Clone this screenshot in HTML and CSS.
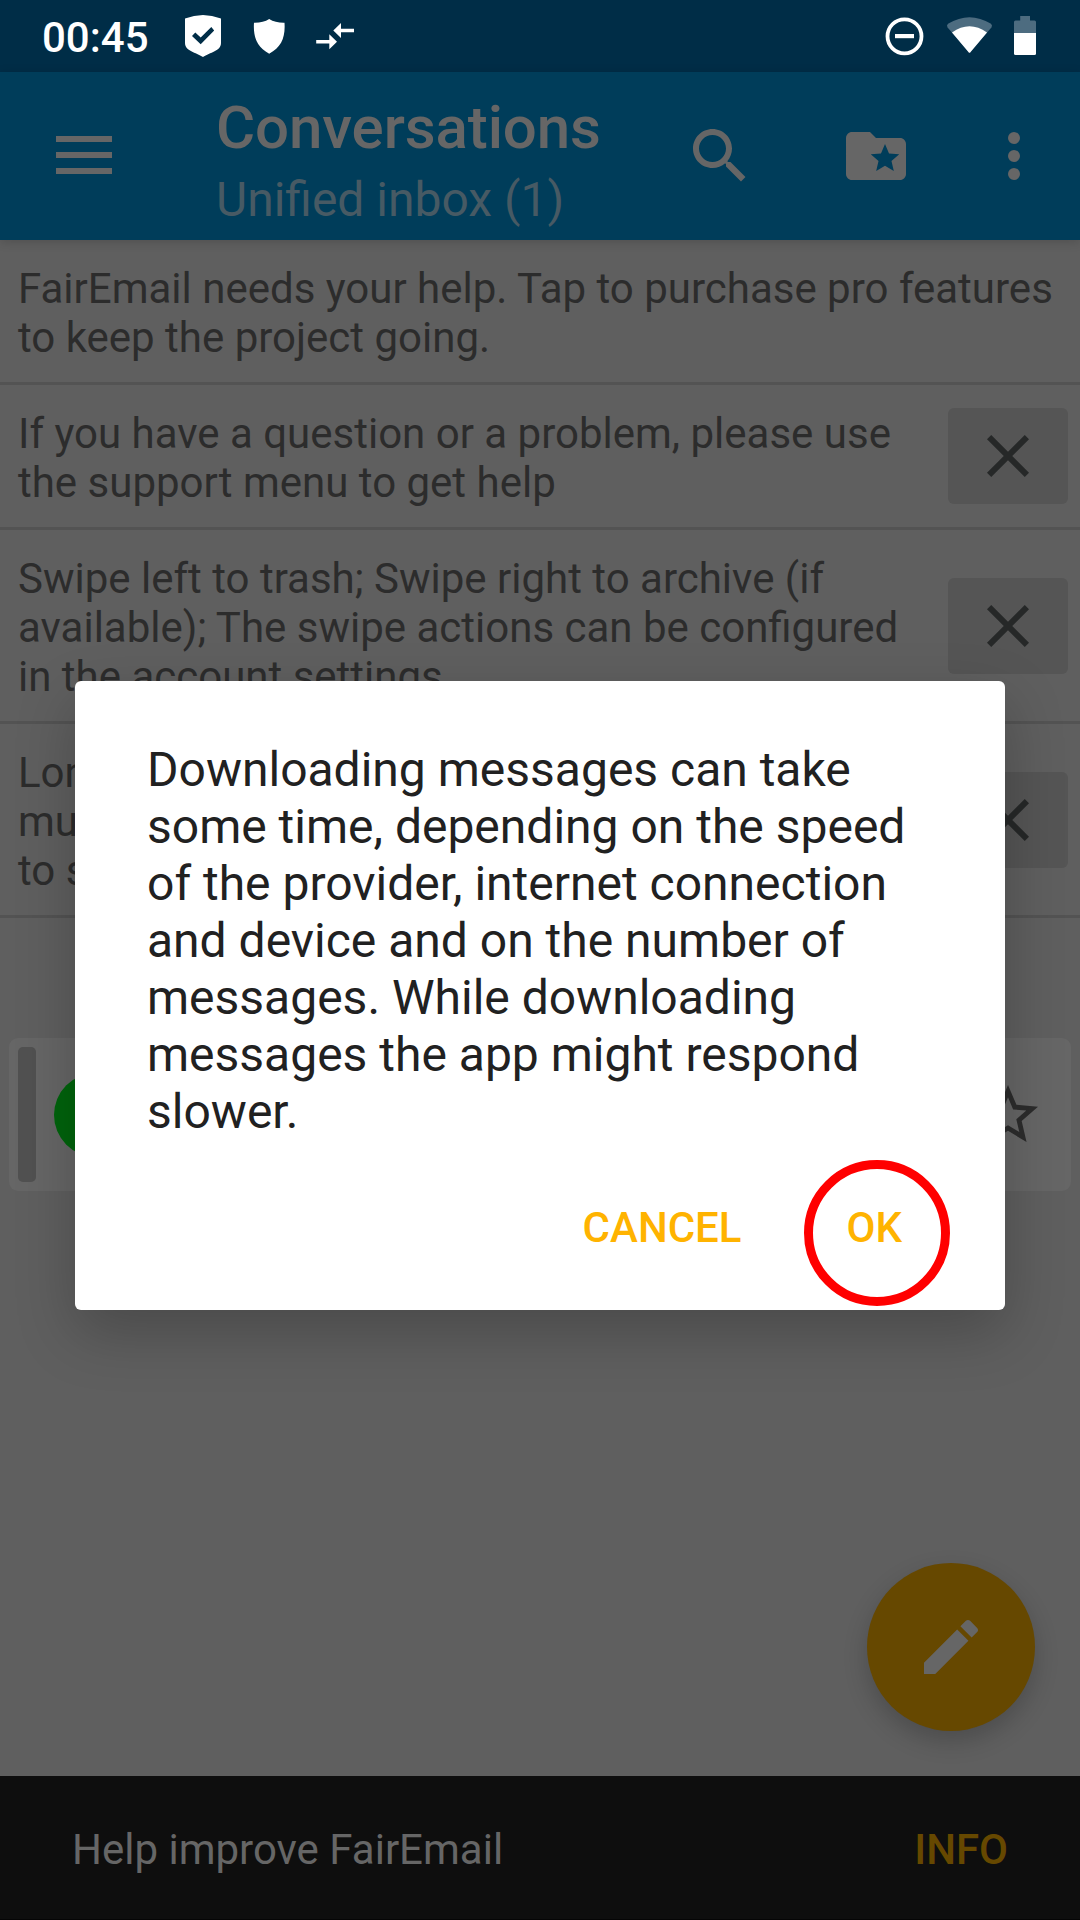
FILE: index.html
```html
<!DOCTYPE html>
<html lang="en">
<head>
<meta charset="utf-8">
<title>FairEmail</title>
<link rel="stylesheet" href="styles.css">
</head>
<body>
<div class="screen">
  <header class="status-bar">
    <span class="clock">00:45</span>
    <svg class="status-left" width="170" height="72" viewBox="185 0 170 72" fill="#fff">
      <path fill-rule="evenodd" d="M185 18.5Q203 11.5 221 18.5V43C221 51 210 52.500 203 57C196 52.500 185 51 185 43ZM195.300 32.500L192 36L200.700 44.200L214.200 30.500L211.300 27L200.700 37.600Z"/>
      <path d="M254 22.800Q263 23 269.200 19Q275.500 23 284.500 22.800C285.500 37 281.500 47.500 269.200 53.700C257 47.500 253 37 254 22.800Z"/>
      <path d="M333.300 30.500L341 23V28.700H354V32.300H341V38ZM337 41.700L329.300 49.200V43.500H316.200V39.900H329.300V34.200Z"/>
    </svg>
    <svg class="status-right" width="152" height="72" viewBox="885 0 152 72" fill="#fff">
      <circle cx="904.500" cy="36.300" r="17" fill="none" stroke="#fff" stroke-width="3.800"/>
      <rect x="895" y="34" width="19" height="4.200"/>
      <path fill="#4d6c80" d="M969.500 53L947.600 27.500Q946.200 25.300 948 23.800Q969.500 10.500 991 23.800Q992.800 25.300 991.400 27.500Z"/>
      <path d="M968 51.500L952 32.500Q969.500 20 987 32.500L971 51.500Q969.500 54 968 51.500Z"/>
      <path fill="#4d6c80" d="M1020.200 16H1030V20.500H1034.500Q1036 20.500 1036 22V33.500H1014V22Q1014 20.500 1015.500 20.500H1020.200Z"/>
      <path d="M1014 33H1036V53.500Q1036 55 1034.500 55H1015.500Q1014 55 1014 53.500Z"/>
    </svg>
  </header>

  <div class="toolbar">
    <svg class="menu-icon" width="56" height="38" viewBox="0 0 56 38"><path d="M0 0h56v6H0zM0 16h56v6H0zM0 32h56v6H0z"/></svg>
    <div class="titles">
      <div class="title">Conversations</div>
      <div class="subtitle">Unified inbox (1)</div>
    </div>
    <div class="toolbar-actions">
      <svg class="icon" viewBox="0 0 24 24"><path d="M15.500 14h-.790l-.280-.270C15.410 12.590 16 11.110 16 9.500 16 5.910 13.090 3 9.500 3S3 5.910 3 9.500 5.910 16 9.500 16c1.610 0 3.090-.590 4.230-1.570l.270.280v.790l5 4.990L20.490 19l-4.990-5zm-6 0C7.010 14 5 11.990 5 9.500S7.010 5 9.500 5 14 7.010 14 9.500 11.990 14 9.500 14z"/></svg>
      <svg class="icon" viewBox="0 0 24 24"><path d="M20 6h-8l-2-2H4c-1.100 0-1.990.9-1.990 2L2 18c0 1.100.9 2 2 2h16c1.100 0 2-.9 2-2V8c0-1.100-.9-2-2-2zm-2.060 11L15 15.280 12.060 17l.780-3.330-2.590-2.240 3.410-.290L15 8l1.340 3.140 3.410.290-2.590 2.240.780 3.330z"/></svg>
      <svg class="icon overflow" viewBox="0 0 24 24"><circle cx="12" cy="6" r="2"/><circle cx="12" cy="12" r="2"/><circle cx="12" cy="18" r="2"/></svg>
    </div>
  </div>

  <main class="content">
    <section class="hint">
      <p class="hint-text">FairEmail needs your help. Tap to purchase pro features<br>to keep the project going.</p>
    </section>
    <section class="hint">
      <p class="hint-text">If you have a question or a problem, please use<br>the support menu to get help</p>
      <div class="dismiss"><svg class="icon" viewBox="0 0 24 24"><path d="M19 6.410L17.590 5 12 10.590 6.410 5 5 6.410 10.590 12 5 17.590 6.410 19 12 13.410 17.590 19 19 17.590 13.410 12z"/></svg></div>
    </section>
    <section class="hint">
      <p class="hint-text">Swipe left to trash; Swipe right to archive (if<br>available); The swipe actions can be configured<br>in the account settings</p>
      <div class="dismiss"><svg class="icon" viewBox="0 0 24 24"><path d="M19 6.410L17.590 5 12 10.590 6.410 5 5 6.410 10.590 12 5 17.590 6.410 19 12 13.410 17.590 19 19 17.590 13.410 12z"/></svg></div>
    </section>
    <section class="hint">
      <p class="hint-text">Lon<br>mul<br>to s</p>
      <div class="dismiss"><svg class="icon" viewBox="0 0 24 24"><path d="M19 6.410L17.590 5 12 10.590 6.410 5 5 6.410 10.590 12 5 17.590 6.410 19 12 13.410 17.590 19 19 17.590 13.410 12z"/></svg></div>
    </section>

    <article class="message-card">
      <div class="account-stripe"></div>
      <div class="avatar"></div>
      <svg class="icon star" viewBox="0 0 24 24"><path d="M22 9.240l-7.190-.620L12 2 9.190 8.630 2 9.240l5.460 4.730L5.820 21 12 17.270 18.180 21l-1.630-7.030L22 9.240zM12 15.400l-3.760 2.270 1-4.280-3.320-2.880 4.380-.380L12 6.100l1.710 4.040 4.380.380-3.320 2.880 1 4.280L12 15.400z"/></svg>
    </article>
  </main>

  <footer class="snackbar">
    <span>Help improve FairEmail</span>
    <span class="snackbar-action">INFO</span>
  </footer>

  <div class="fab">
    <svg class="icon" viewBox="0 0 24 24"><path d="M3 17.250V21h3.750L17.810 9.940l-3.750-3.750L3 17.250zM20.710 7.040c.390-.390.390-1.020 0-1.410l-2.340-2.340c-.390-.390-1.020-.390-1.410 0l-1.830 1.830 3.750 3.750 1.830-1.830z"/></svg>
  </div>

  <div class="overlay">
    <div class="dialog" role="dialog">
      <p class="dialog-text">Downloading messages can take<br>some time, depending on the speed<br>of the provider, internet connection<br>and device and on the number of<br>messages. While downloading<br>messages the app might respond<br>slower.</p>
      <div class="dialog-actions">
        <span>CANCEL</span>
        <span class="ok">OK</span>
      </div>
    </div>
  </div>
</div>
</body>
</html>
```
FILE: styles.css
```css
*,
*::after { box-sizing: border-box; }

body {
  margin: 0;
  font-family: Roboto, sans-serif;
  font-size: 42px;
  line-height: 49px;
}

p { margin: 0; }

svg { display: block; flex: none; }

.icon { width: 72px; height: 72px; }

.screen {
  position: relative;
  display: flex;
  flex-direction: column;
  width: 1080px;
  height: 1920px;
  overflow: hidden;
  background: #5f5f5f;
}

.status-bar {
  display: flex;
  flex: none;
  height: 72px;
  padding: 0 43px 0 42px;
  background: #002d47;
  color: #fff;
}

.clock {
  width: 143px;
  padding-top: 13px;
  font-weight: 500;
}

.status-right { margin-left: auto; }

.toolbar {
  position: relative;
  display: flex;
  align-items: center;
  flex: none;
  height: 168px;
  padding: 0 30px 0 56px;
  background: #003d5a;
  box-shadow: 0 2px 10px rgba(0, 0, 0, 0.16);
  color: #666;
  fill: #666;
}

.menu-icon { margin-top: -2px; }

.titles {
  align-self: flex-start;
  flex: 1;
  padding: 21px 0 0 104px;
  white-space: nowrap;
}

.title {
  font-size: 60px;
  font-weight: 500;
  line-height: 70px;
  letter-spacing: -0.1px;
}

.subtitle {
  padding-top: 8px;
  font-size: 48px;
  line-height: 57px;
  color: #475a64;
}

.toolbar-actions {
  display: flex;
  gap: 84px;
}

.overflow { margin-left: -18px; }

.content { flex: 1; }

.hint {
  display: flex;
  align-items: center;
  justify-content: space-between;
  padding: 0 12px 0 18px;
  border-bottom: 3px solid #535353;
  color: #2c2c2c;
}

.hint-text {
  padding: 24px 0 20px;
  white-space: nowrap;
}

.dismiss {
  display: flex;
  align-items: center;
  justify-content: center;
  width: 120px;
  height: 96px;
  border-radius: 6px;
  background: #555;
  fill: #262828;
}

.message-card {
  display: flex;
  align-items: center;
  height: 153px;
  margin: 120px 9px 0;
  padding: 9px 27px 9px 9px;
  border-radius: 9px;
  background: #666;
}

.account-stripe {
  align-self: stretch;
  width: 18px;
  border-radius: 5px;
  background: #515151;
}

.avatar {
  width: 84px;
  height: 84px;
  margin-left: 18px;
  border-radius: 50%;
  background: #00640c;
}

.star {
  margin-left: auto;
  fill: #2c2c2c;
}

.snackbar {
  display: flex;
  flex: none;
  align-items: center;
  justify-content: space-between;
  height: 144px;
  padding: 4px 72px 0;
  border-bottom: 1px solid #050505;
  background: #0e0e0e;
  color: #666;
}

.snackbar-action {
  font-weight: 500;
  color: #664800;
}

.fab {
  position: absolute;
  right: 45px;
  bottom: 189px;
  display: flex;
  align-items: center;
  justify-content: center;
  width: 168px;
  height: 168px;
  border-radius: 50%;
  background: #664800;
  box-shadow: 0 10px 24px rgba(0, 0, 0, 0.2);
  fill: #666;
}

.overlay {
  position: absolute;
  inset: 0;
  display: flex;
  align-items: flex-start;
  justify-content: center;
  padding-top: 681px;
}

.dialog {
  width: 930px;
  height: 629px;
  padding: 60px 72px 0;
  border-radius: 6px;
  background: #fff;
  box-shadow: 0 22px 60px rgba(0, 0, 0, 0.23);
}

.dialog-text {
  font-size: 48px;
  line-height: 57px;
  white-space: nowrap;
  color: #212121;
}

.dialog-actions {
  display: flex;
  justify-content: flex-end;
  gap: 105px;
  padding: 63px 31px 0 0;
  font-weight: 500;
  color: #ffb300;
}

.ok { position: relative; }

.ok::after {
  content: "";
  position: absolute;
  top: -43px;
  left: -43px;
  width: 146px;
  height: 146px;
  border: 9px solid #f00;
  border-radius: 50%;
}
```
